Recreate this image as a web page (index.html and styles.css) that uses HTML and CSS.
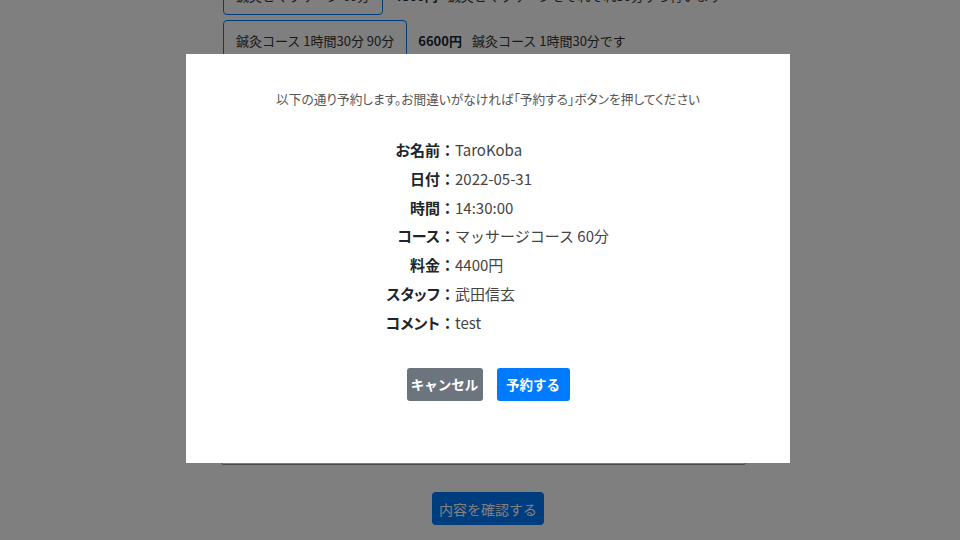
FILE: index.html
```html
<!DOCTYPE html>
<html lang="ja">
<head>
<meta charset="utf-8">
<title>予約確認</title>
<link rel="stylesheet" href="styles.css">
</head>
<body>
<main class="page">
  <div class="course-row">
    <button class="btn-outline">鍼灸とマッサージ 60分</button>
    <span class="price">4800円</span>
    <span class="desc">鍼灸とマッサージをそれぞれ30分ずつ行います</span>
  </div>
  <div class="course-row">
    <button class="btn-outline">鍼灸コース 1時間30分 90分</button>
    <span class="price">6600円</span>
    <span class="desc">鍼灸コース 1時間30分です</span>
  </div>
  <textarea class="comment">test</textarea>
  <div class="submit-wrap">
    <button class="btn-submit">内容を確認する</button>
  </div>
</main>

<div class="backdrop"></div>

<div class="modal">
  <p class="lead">以下の通り予約します。お間違いがなければ「予約する」ボタンを押してください</p>
  <dl class="summary">
    <dt>お名前<span class="colon">：</span></dt><dd>TaroKoba</dd>
    <dt>日付<span class="colon">：</span></dt><dd>2022-05-31</dd>
    <dt>時間<span class="colon">：</span></dt><dd>14:30:00</dd>
    <dt>コース<span class="colon">：</span></dt><dd>マッサージコース 60分</dd>
    <dt>料金<span class="colon">：</span></dt><dd>4400円</dd>
    <dt>スタッフ<span class="colon">：</span></dt><dd>武田信玄</dd>
    <dt>コメント<span class="colon">：</span></dt><dd>test</dd>
  </dl>
  <div class="actions">
    <button class="btn btn-cancel">キャンセル</button>
    <button class="btn btn-primary">予約する</button>
  </div>
</div>
</body>
</html>
```

FILE: styles.css
```css
* { box-sizing: border-box; }

html, body {
  margin: 0;
  padding: 0;
  height: 100%;
  overflow: hidden;
  background: #ffffff;
  font-family: "Noto Sans CJK JP", "Noto Sans", sans-serif;
  color: #212529;
}

.page {
  width: 525px;
  margin: -25px 0 0 221px;
}

.course-row {
  display: flex;
  align-items: center;
  margin-bottom: 5px;
  margin-left: 2px;
  font-size: 13px;
  white-space: nowrap;
}

.btn-outline {
  height: 40px;
  padding: 0 12px;
  border: 1.5px solid #007bff;
  border-radius: 4px;
  background: #fff;
  color: #333;
  font-family: inherit;
  font-size: 13px;
  white-space: nowrap;
}

.price {
  font-weight: bold;
  margin-left: 11px;
  font-size: 13px;
}

.desc {
  margin-left: 10px;
  color: #333;
}

.comment {
  display: block;
  width: 525px;
  height: 160px;
  margin-top: 245px;
  border: 1px solid #999;
  border-radius: 2px;
  font-family: inherit;
}

.submit-wrap {
  display: flex;
  justify-content: center;
  padding-left: 9px;
  margin-top: 27px;
}

.btn-submit {
  width: 112px;
  height: 33px;
  border: none;
  border-radius: 4px;
  background: #007bff;
  color: #fff;
  font-family: inherit;
  font-size: 14px;
  white-space: nowrap;
}

.backdrop {
  position: fixed;
  inset: 0;
  background: rgba(0, 0, 0, 0.5);
}

.modal {
  position: fixed;
  left: 186px;
  top: 54px;
  width: 604px;
  height: 409px;
  background: #fff;
  padding-top: 35px;
  display: flex;
  flex-direction: column;
  align-items: center;
}

.lead {
  margin: 0;
  font-size: 12.7px;
  color: #555;
  font-feature-settings: "palt";
  white-space: nowrap;
}

.summary {
  display: grid;
  grid-template-columns: 269px 1fr;
  width: 100%;
  margin: 28px 0 0;
  font-size: 15px;
  line-height: 28.8px;
}

.summary dt {
  text-align: right;
  font-weight: bold;
  color: #212529;
  font-feature-settings: "palt";
}

.summary dt .colon {
  font-feature-settings: normal;
}

.summary dd {
  margin: 0;
  color: #444;
}

.actions {
  display: flex;
  gap: 14px;
  margin-top: 30px;
}

.btn {
  height: 33px;
  border: none;
  border-radius: 3px;
  color: #fff;
  font-family: inherit;
  font-size: 13.5px;
  font-weight: bold;
  padding: 0;
  white-space: nowrap;
}

.btn-cancel {
  background: #6c757d;
  width: 76px;
}

.btn-primary {
  background: #007bff;
  width: 73px;
}
```
